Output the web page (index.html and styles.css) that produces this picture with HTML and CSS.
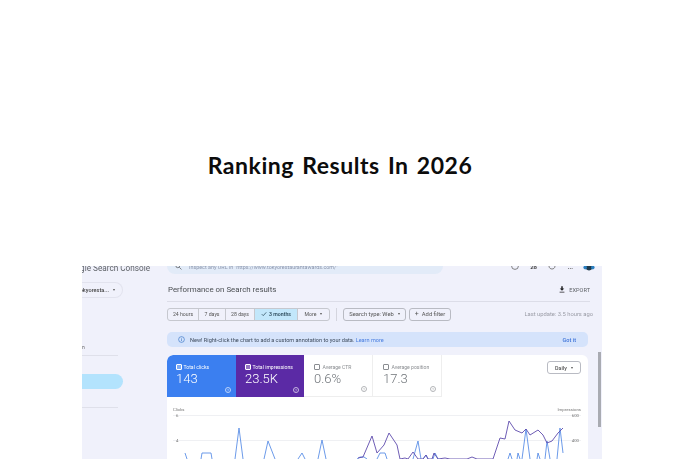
FILE: index.html
```html
<!DOCTYPE html>
<html lang="en">
<head>
<meta charset="utf-8">
<title>Ranking Results In 2026</title>
<link rel="stylesheet" href="styles.css">
</head>
<body>
<header class="hero"><h1 class="title">Ranking Results In 2026</h1></header>
<section class="shot">
  <aside class="side">
    <div class="brand">Google Search Console</div>
    <div class="prop-row"><div class="prop">tokyoresta...<span class="caret"></span></div></div>
    <div class="side-label">n</div>
    <div class="rule"></div>
    <div class="active"></div>
    <div class="rule rule-b"></div>
  </aside>
  <main class="main">
    <div class="topbar">
      <div class="search">
        <svg class="search-ico" viewBox="0 0 8 8"><circle cx="3.2" cy="3.2" r="2.2"/><path d="M5 5l2.4 2.4"/></svg>
        <span>Inspect any URL in "https://www.tokyorestaurantawards.com/"</span>
      </div>
      <div class="tools">
        <span class="tool-cell"><svg class="tool" viewBox="0 0 8 8"><circle cx="4" cy="0" r="3.4"/></svg></span>
        <span class="tool-cell tool-text">28</span>
        <span class="tool-cell"><svg class="tool" viewBox="0 0 8 8"><path d="M1 0c0 4 6 4 6 0"/></svg></span>
        <span class="tool-cell tool-text">...</span>
        <span class="tool-cell"><svg class="avatar" viewBox="0 0 12 6"><circle cx="6" cy="0" r="4.4" fill="#1e3a4c"/><circle cx="2.2" cy="1.6" r="1.8" fill="#2a7fc0"/><circle cx="9.8" cy="1.6" r="1.8" fill="#2a7fc0"/></svg></span>
      </div>
    </div>
    <div class="head">
      <h2 class="page-title">Performance on Search results</h2>
      <div class="export">
        <svg class="dl" viewBox="0 0 8 9"><path d="M3 0h2v3h2L4 6.2 1 3h2zM.8 7.6h6.4v1H.8z"/></svg>
        EXPORT
      </div>
    </div>
    <div class="filters">
      <div class="seg">
        <span class="seg-i s1">24 hours</span>
        <span class="seg-i s2">7 days</span>
        <span class="seg-i s3">28 days</span>
        <span class="seg-i s4 on"><svg class="check" viewBox="0 0 8 8"><path d="M1 4.2l2 2 4-4.4"/></svg>3 months</span>
        <span class="seg-i s5">More<span class="caret"></span></span>
      </div>
      <span class="vbar"></span>
      <span class="chip c1">Search type: Web<span class="caret"></span></span>
      <span class="chip c2"><b class="plus">+</b>Add filter</span>
      <span class="updated">Last update: 3.5 hours ago</span>
    </div>
    <div class="banner">
      <svg class="info" viewBox="0 0 8 8"><circle cx="4" cy="4" r="3.3"/><path d="M4 3.6v2.2M4 2.2v.8"/></svg>
      <span class="banner-text">New! Right-click the chart to add a custom annotation to your data. <a class="learn">Learn more</a></span>
      <span class="gotit">Got it</span>
    </div>
    <div class="card">
      <div class="tiles">
        <div class="tile t-blue">
          <div class="tile-h"><span class="box box-on"></span>Total clicks</div>
          <div class="tile-v">143</div><span class="q">?</span>
        </div>
        <div class="tile t-purple">
          <div class="tile-h"><span class="box box-on"></span>Total impressions</div>
          <div class="tile-v">23.5K</div><span class="q">?</span>
        </div>
        <div class="tile t-plain">
          <div class="tile-h"><span class="box"></span>Average CTR</div>
          <div class="tile-v">0.6%</div><span class="q">?</span>
        </div>
        <div class="tile t-plain">
          <div class="tile-h"><span class="box"></span>Average position</div>
          <div class="tile-v">17.3</div><span class="q">?</span>
        </div>
        <div class="daily-wrap"><span class="daily">Daily<span class="caret"></span></span></div>
      </div>
      <svg class="chart" viewBox="167 397 421 62" width="421" height="62">
        <line class="grid" x1="173" x2="581" y1="415.5" y2="415.5"/>
        <line class="grid" x1="173" x2="581" y1="440.5" y2="440.5"/>
        <text class="ax" x="173" y="410.5">Clicks</text>
        <text class="ax" x="176" y="417">6</text>
        <text class="ax" x="176" y="442">4</text>
        <text class="ax" x="581" y="410.5" text-anchor="end">Impressions</text>
        <text class="ax" x="579" y="417" text-anchor="end">600</text>
        <text class="ax" x="579" y="442" text-anchor="end">400</text>
        <polyline class="s-blue" points="185,453 187,459"/>
        <polyline class="s-blue" points="201,459 202,453 211,453 212,459"/>
        <polyline class="s-blue" points="235,459 239,428 243,459"/>
        <polyline class="s-blue" points="264,459 268,441 275,459"/>
        <polyline class="s-blue" points="298,459 302,453 305,459"/>
        <polyline class="s-blue" points="318,459 322,440 326,459"/>
        <polyline class="s-blue" points="357,459 360,457 364,457 367,459"/>
        <polyline class="s-blue" points="377,459 380,453 385,453 387,459"/>
        <polyline class="s-blue" points="413,459 418,441 421,459"/>
        <polyline class="s-blue" points="423,459 426,455 428,459"/>
        <polyline class="s-blue" points="433,459 435,453 438,459"/>
        <polyline class="s-blue" points="508,459 510,453 512,459"/>
        <polyline class="s-blue" points="517,459 518,453 520,459"/>
        <polyline class="s-blue" points="522,459 526,429 530,459"/>
        <polyline class="s-blue" points="537,459 538,453 540,459"/>
        <polyline class="s-blue" points="545,459 547,441 550,459"/>
        <polyline class="s-blue" points="557,459 560,428 563,453"/>
        <polyline class="s-purple" points="358,458 363,457 372,436 377,453 384,445 389,433 397,445 400,459 405,458 408,459 413,452 418,459 423,459 426,455 428,459 432,459 434,453 438,459 445,458 450,459 467,459 472,457 477,459 493,459 500,438 505,439 509,421 515,430 522,433 526,429 530,435 538,430 543,435 547,443 552,441 558,433 563,428"/>
      </svg>
    </div>
  </main>
  <div class="scroll"><span class="thumb"></span></div>
</section>
</body>
</html>
```

FILE: styles.css
```css
* { box-sizing: border-box; }
html, body { margin: 0; height: 459px; overflow: hidden; background: #fff; }
body { font-family: Roboto, "Liberation Sans", sans-serif; }

.hero { height: 266px; padding-top: 64px; display: flex; align-items: center; justify-content: center; }
.title { margin: 0; font: 700 23px Lato, "Open Sans", sans-serif; color: #0c0c0c; letter-spacing: .55px; word-spacing: 2px; }

.shot { margin-left: 82px; width: 520px; height: 193px; background: #f0f1fb; display: flex; overflow: hidden; filter: blur(.6px); color: #5f6368; }

.side { width: 85px; flex: none; overflow: hidden; }
.brand { width: 68px; height: 9px; display: flex; justify-content: flex-end; white-space: nowrap; font-size: 8.2px; line-height: 4px; color: #5f6368; }
.prop-row { margin-top: 7px; width: 41px; }
.prop { height: 16px; display: flex; justify-content: flex-end; align-items: center; padding-right: 7px; border: 1px solid #e2e3ee; border-left: 0; border-radius: 0 8px 8px 0; font-size: 5.6px; font-weight: 500; white-space: nowrap; color: #444; overflow: hidden; }
.side-label { margin-top: 46px; font-size: 5px; height: 7px; line-height: 7px; color: #666; }
.rule { margin-top: 4px; width: 36px; height: 1px; background: #dfe0ea; }
.active { margin-top: 18px; width: 41px; height: 15px; background: #b3e3fd; border-radius: 0 8px 8px 0; }
.rule-b { margin-top: 18px; }

.main { width: 421px; flex: none; }
.topbar { height: 8px; display: flex; justify-content: space-between; }
.search { width: 276px; height: 8px; padding: 0 8px; background: #e2ebf8; border-radius: 0 0 9px 9px; display: flex; align-items: flex-start; gap: 7px; font-size: 5.4px; line-height: 2px; color: #8d97ad; white-space: nowrap; overflow: hidden; }
.search-ico { width: 7px; height: 7px; margin-top: -3px; fill: none; stroke: #5f6368; stroke-width: .9; flex: none; }
.tools { display: flex; width: 92px; margin-right: -10px; }
.tool-cell { width: 18.4px; display: flex; justify-content: center; align-items: flex-start; }
.tool { width: 8px; height: 8px; fill: none; stroke: #666; stroke-width: .8; }
.tool-text { font-size: 6px; line-height: 2px; font-weight: 700; color: #444; }
.avatar { width: 12px; height: 6px; }

.head { height: 28px; display: flex; align-items: center; justify-content: space-between; border-bottom: 1px solid #dcdde8; width: 423px; padding: 4px 0 0 1px; }
.page-title { margin: 0; font-size: 7.9px; font-weight: 400; color: #4a4e52; }
.export { display: flex; align-items: center; gap: 4px; font-size: 5.6px; color: #5f6368; }
.dl { width: 6px; height: 7px; fill: #202124; }

.filters { margin-top: 5px; height: 14px; display: flex; align-items: center; font-size: 5.2px; width: 426px; }
.seg { display: flex; height: 13px; border: 1px solid #c6c8cf; border-radius: 3px; overflow: hidden; }
.seg-i { display: flex; align-items: center; justify-content: center; border-right: 1px solid #c6c8cf; color: #555; white-space: nowrap; }
.s1 { width: 31px; } .s2 { width: 27px; } .s3 { width: 29px; } .s4 { width: 43px; } .s5 { width: 31px; border-right: 0; }
.on { background: #c2e7fb; color: #1d3a4a; font-weight: 500; }
.check { width: 6px; height: 6px; margin-right: 2px; fill: none; stroke: #1d3a4a; stroke-width: .9; }
.caret { width: 0; height: 0; margin-left: 4px; border: 1.6px solid transparent; border-top: 2px solid #555; border-bottom: 0; }
.vbar { width: 1px; height: 13px; margin: 0 6px; background: #d4d5de; }
.chip { height: 13px; display: flex; align-items: center; justify-content: center; border: 1px solid #b9bbc3; border-radius: 3px; color: #555; white-space: nowrap; font-size: 5.8px; }
.c1 { width: 63px; }
.c2 { width: 42px; margin-left: 3px; }
.plus { font-weight: 400; font-size: 7px; margin-right: 3px; }
.updated { margin-left: auto; color: #9a9ca6; font-size: 5.8px; }

.banner { margin-top: 11px; height: 15px; display: flex; align-items: center; background: #d5e3fb; border-radius: 5px; font-size: 5.55px; color: #3d4a5c; }
.info { width: 7px; height: 7px; margin: 0 5px 0 11px; fill: none; stroke: #2d6fc4; stroke-width: .7; }
.banner-text { white-space: nowrap; }
.learn { color: #4b7fe0; }
.gotit { margin-left: auto; padding-right: 12px; color: #3d72d8; font-weight: 500; }

.card { margin-top: 8px; height: 120px; background: #fff; border-radius: 6px 6px 0 0; overflow: hidden; }
.tiles { height: 42px; display: flex; }
.tile { position: relative; width: 69px; padding: 9px 5px 0 9px; border-right: 1px solid #eee; border-bottom: 1px solid #eee; color: #8a8d91; }
.t-blue { background: #3b7ff0; color: #fff; border: 0; border-top-left-radius: 6px; }
.t-purple { width: 68px; background: #5b2aa5; color: #fff; border: 0; }
.t-plain { padding-left: 10px; }
.tile-h { display: flex; align-items: center; gap: 2px; font-size: 5.1px; white-space: nowrap; }
.t-plain .tile-h { gap: 3px; }
.box { width: 5.5px; height: 5.5px; border: .7px solid currentColor; border-radius: 1px; flex: none; }
.box-on { background: rgba(255,255,255,.35); }
.tile-v { font-size: 13px; line-height: 16px; margin-top: 1px; font-weight: 300; }
.t-plain .tile-v { color: #70757a; }
.q { position: absolute; right: 5px; bottom: 4px; width: 6px; height: 6px; border: .6px solid currentColor; border-radius: 50%; font-size: 4px; line-height: 5px; text-align: center; opacity: .65; }
.daily-wrap { flex: 1; display: flex; justify-content: flex-end; padding: 6px 7px 0 0; }
.daily { width: 34px; height: 13px; display: flex; align-items: center; justify-content: center; border: 1px solid #b9bbc3; border-radius: 3px; font-size: 5.4px; font-weight: 500; color: #555; }
.chart { display: block; }
.grid { stroke: #eff0f3; stroke-width: 1; }
.ax { font-size: 4.3px; fill: #777; }
.s-blue { fill: none; stroke: #5b8ee6; stroke-width: .9; }
.s-purple { fill: none; stroke: #5e4bad; stroke-width: .9; }

.scroll { margin-left: 10px; width: 4px; }
.thumb { display: block; margin-top: 86px; width: 3px; height: 75px; background: #a9abb2; }
```
